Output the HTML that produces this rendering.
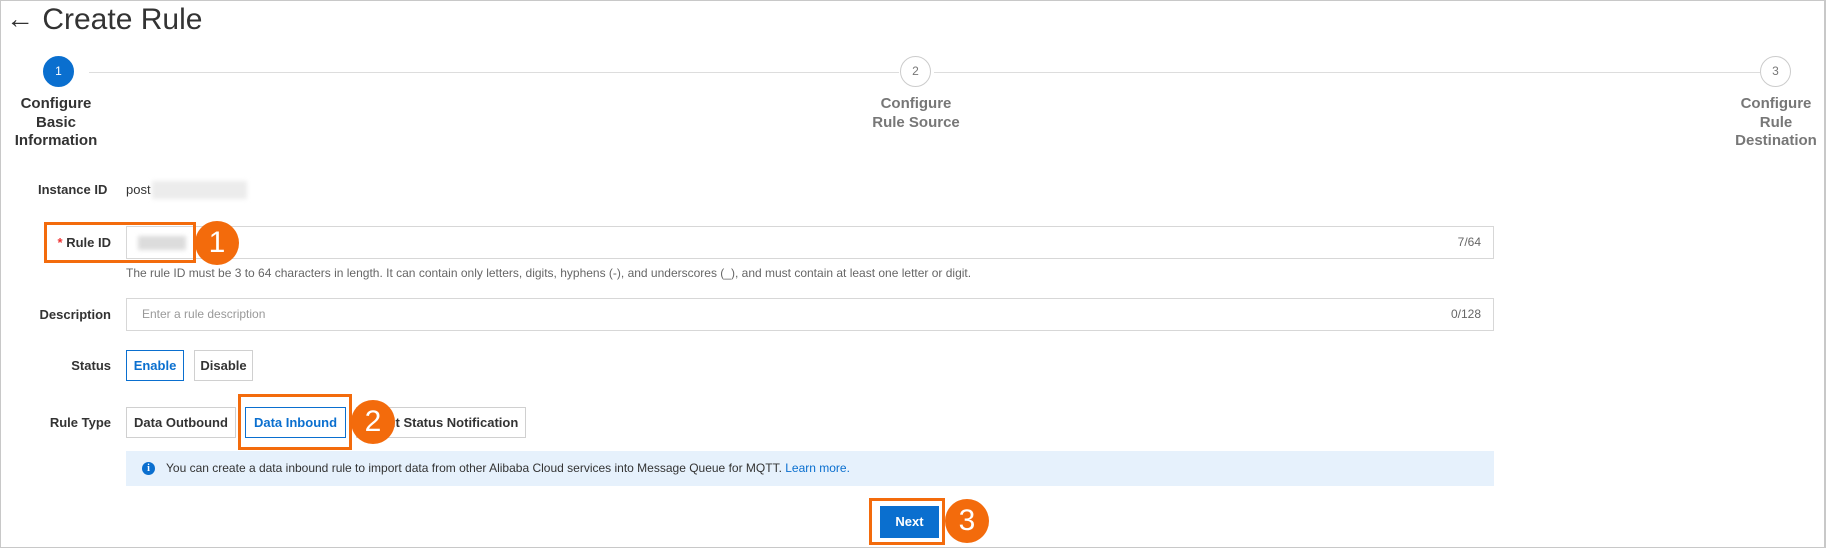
<!DOCTYPE html>
<html><head><meta charset="utf-8"><style>
*{box-sizing:border-box;margin:0;padding:0}
body{width:1828px;height:549px;background:#fff;font-family:"Liberation Sans",Tahoma,sans-serif;color:#333;position:relative;overflow:hidden}
.a{position:absolute}
.frame{left:0;top:0;width:1826px;height:548px;border:1px solid #c8c8c8;border-right:2px solid #c8c8c8}
.title{left:6px;top:3px;font-size:30px;color:#333;white-space:nowrap}
.circ{width:31px;height:31px;border-radius:50%;text-align:center;line-height:29px;font-size:12px}
.line{height:1px;background:#ddd;top:72px}
.sl{font-size:15px;font-weight:bold;text-align:center;line-height:18.5px;width:140px}
.lab{font-size:13px;font-weight:bold;color:#333;text-align:right;width:120px;left:0}
.inp{border:1px solid #d7d7d7;background:#fff;left:126px;width:1368px}
.btn{border:1px solid #d0d0d0;background:#fff;font-size:13px;font-weight:bold;color:#333;text-align:center;height:31px;line-height:29px}
.ob{border:3px solid #f36b0c}
.oc{width:44px;height:44px;border-radius:50%;background:#f36b0c;color:#fff;font-size:30px;text-align:center;line-height:44px}
.blur{background:#e4e4e4;filter:blur(2px)}
</style></head><body>
<div class="a frame"></div>
<div class="a title"><span style="font-size:28px;font-weight:bold;position:relative;top:-1px">&#8592;</span> Create Rule</div>

<div class="a line" style="left:89px;width:810px"></div>
<div class="a line" style="left:934px;width:826px"></div>
<div class="a circ" style="left:43px;top:56px;background:#0a6fcf;color:#fff;border:1px solid #0a6fcf">1</div>
<div class="a circ" style="left:900px;top:56px;border:1px solid #ccc;color:#777">2</div>
<div class="a circ" style="left:1760px;top:56px;border:1px solid #ccc;color:#777">3</div>
<div class="a sl" style="left:-14px;top:95px;color:#333">Configure<br>Basic<br>Information</div>
<div class="a sl" style="left:846px;top:95px;color:#777">Configure<br>Rule Source</div>
<div class="a sl" style="left:1706px;top:95px;color:#777">Configure<br>Rule<br>Destination</div>

<div class="a lab" style="top:182px;left:23px;width:120px;text-align:left;padding-left:15px">Instance ID</div>
<div class="a" style="left:126px;top:182px;font-size:13px">post</div>
<div class="a blur" style="left:152px;top:181px;width:95px;height:18px;background:#ececec"></div>

<div class="a inp" style="top:226px;height:33px"></div>
<div class="a blur" style="left:138px;top:236px;width:48px;height:14px;background:#dcdcdc"></div>
<div class="a" style="right:347px;top:235px;font-size:12px;color:#666">7/64</div>
<div class="a lab" style="top:235px;left:0;width:111px"><span style="color:#e33">*</span> Rule ID</div>
<div class="a ob" style="left:44px;top:222px;width:152px;height:41px"></div>
<div class="a oc" style="left:195px;top:221px">1</div>
<div class="a" style="left:126px;top:266px;font-size:12px;color:#666;white-space:nowrap">The rule ID must be 3 to 64 characters in length. It can contain only letters, digits, hyphens (-), and underscores (_), and must contain at least one letter or digit.</div>

<div class="a inp" style="top:298px;height:33px"></div>
<div class="a" style="left:142px;top:307px;font-size:12px;color:#999">Enter a rule description</div>
<div class="a" style="right:347px;top:307px;font-size:12px;color:#666">0/128</div>
<div class="a lab" style="top:307px;width:111px">Description</div>

<div class="a lab" style="top:358px;width:111px">Status</div>
<div class="a btn" style="left:126px;top:350px;width:58px;border-color:#0a6fcf;color:#0a6fcf">Enable</div>
<div class="a btn" style="left:194px;top:350px;width:59px">Disable</div>

<div class="a lab" style="top:415px;width:111px">Rule Type</div>
<div class="a btn" style="left:126px;top:407px;width:110px">Data Outbound</div>
<div class="a btn" style="left:245px;top:407px;width:101px;border-color:#0a6fcf;color:#0a6fcf">Data Inbound</div>
<div class="a btn" style="left:356px;top:407px;width:170px">Client Status Notification</div>
<div class="a ob" style="left:238px;top:394px;width:114px;height:56px"></div>
<div class="a oc" style="left:351px;top:400px">2</div>

<div class="a" style="left:126px;top:451px;width:1368px;height:35px;background:#e6f1fc"></div>
<div class="a" style="left:142px;top:462px;width:13px;height:13px;border-radius:50%;background:#0a6fcf;color:#fff;font-size:10px;font-weight:bold;text-align:center;line-height:13px;font-family:'Liberation Serif',serif">i</div>
<div class="a" style="left:166px;top:461px;font-size:12px;color:#333;white-space:nowrap">You can create a data inbound rule to import data from other Alibaba Cloud services into Message Queue for MQTT. <span style="color:#0a6fcf">Learn more.</span></div>

<div class="a" style="left:880px;top:506px;width:59px;height:32px;background:#0a6fcf;color:#fff;font-size:13px;font-weight:bold;text-align:center;line-height:32px">Next</div>
<div class="a ob" style="left:869px;top:498px;width:76px;height:47px"></div>
<div class="a oc" style="left:945px;top:499px">3</div>
</body></html>
